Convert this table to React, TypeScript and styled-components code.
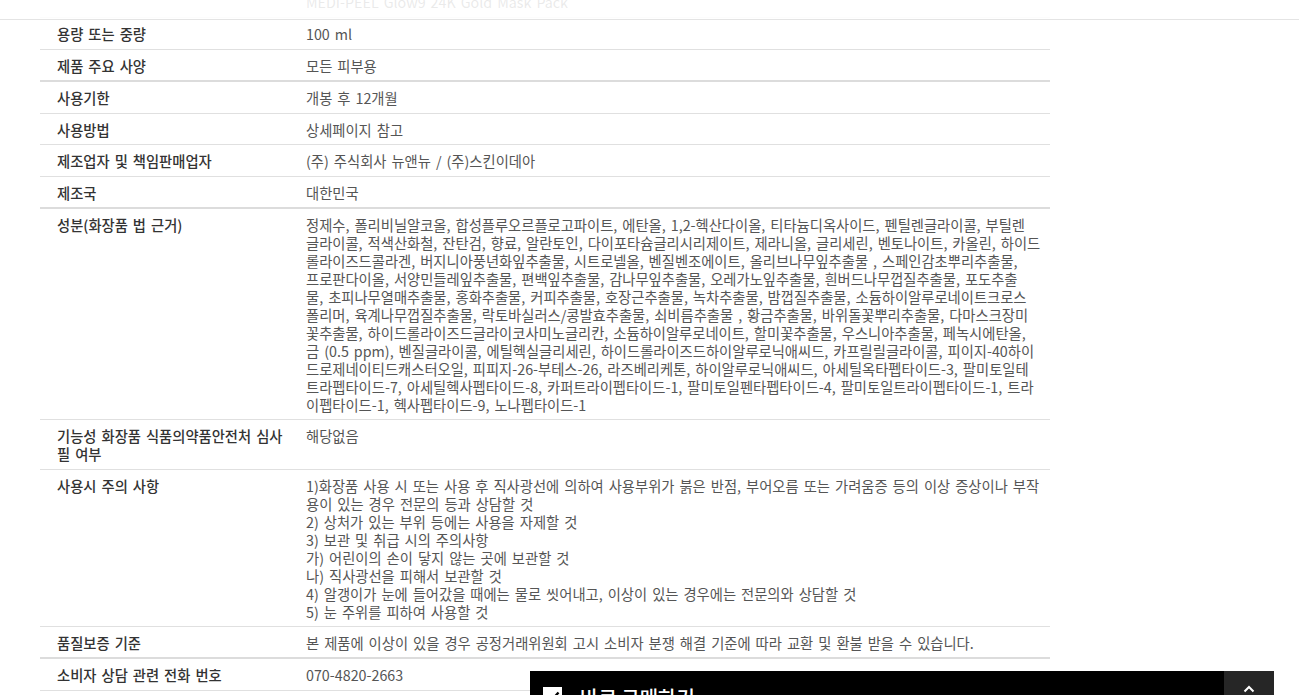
import React from "react";
import styled, { createGlobalStyle } from "styled-components";

const GlobalStyle = createGlobalStyle`
  html, body { margin: 0; padding: 0; background: #fff; }
  body {
    font-family: "Noto Sans CJK KR", "Noto Sans", sans-serif;
    font-size: 14.3px;
    word-spacing: 1.8px;
    color: #555;
  }
`;

const TopBar = styled.div`
  position: fixed;
  top: 0;
  left: 0;
  right: 0;
  height: 19px;
  background: rgba(255, 255, 255, 0.88);
  border-bottom: 1px solid #e4e4e4;
  z-index: 5;
`;

const Page = styled.main`
  padding-left: 40px;
  margin-top: -32px;
`;

const Table = styled.div`
  width: 1010px;
  display: flex;
  flex-direction: column;
`;

const Row = styled.div<{ $strong?: boolean; $tight?: boolean }>`
  display: grid;
  grid-template-columns: 266px 1fr;
  padding: 7px 0 ${(p) => (p.$strong || p.$tight ? "5px" : "6px")};
  border-bottom: ${(p) => (p.$strong ? "2px solid #dcdcdc" : "1px solid #e0e0e0")};
  line-height: 18px;
`;

const Label = styled.div`
  padding: 0 20px 0 17px;
  color: #333;
  font-weight: 500;
`;

const Value = styled.div`
  color: #555;
  white-space: pre;
`;

const BuyBar = styled.div`
  position: fixed;
  left: 530px;
  top: 671px;
  width: 744px;
  height: 54px;
  display: flex;
  background: #000;
  z-index: 6;
`;

const BuyLabel = styled.div`
  flex: 1;
  display: flex;
  align-items: flex-start;
  gap: 18px;
  padding: 15px 0 0 13px;
  color: #fff;
  font-size: 20px;
  font-weight: 500;
  line-height: 24px;
  word-spacing: 0;
`;

const CheckBox = styled.span`
  width: 19px;
  height: 19px;
  margin-top: 1px;
  background: #fff;
  display: flex;
  align-items: center;
  justify-content: center;
`;

const TopButton = styled.div`
  width: 50px;
  background: #262626;
  display: flex;
  justify-content: center;
  padding-top: 14px;
`;

type Item = { label: string; value: string; strong?: boolean; tight?: boolean };

const items: Item[] = [
  { label: "제품명", value: "메디필 글로우9 24K 골드 마스크팩\nMEDI-PEEL Glow9 24K Gold Mask Pack" },
  { label: "용량 또는 중량", value: "100 ml" },
  { label: "제품 주요 사양", value: "모든 피부용", strong: true },
  { label: "사용기한", value: "개봉 후 12개월" },
  { label: "사용방법", value: "상세페이지 참고", tight: true },
  { label: "제조업자 및 책임판매업자", value: "(주) 주식회사 뉴앤뉴 / (주)스킨이데아" },
  { label: "제조국", value: "대한민국", strong: true },
  {
    label: "성분(화장품 법 근거)",
    tight: true,
    value: [
      "정제수, 폴리비닐알코올, 합성플루오르플로고파이트, 에탄올, 1,2-헥산다이올, 티타늄디옥사이드, 펜틸렌글라이콜, 부틸렌",
      "글라이콜, 적색산화철, 잔탄검, 향료, 알란토인, 다이포타슘글리시리제이트, 제라니올, 글리세린, 벤토나이트, 카올린, 하이드",
      "롤라이즈드콜라겐, 버지니아풍년화잎추출물, 시트로넬올, 벤질벤조에이트, 올리브나무잎추출물 , 스페인감초뿌리추출물,",
      "프로판다이올, 서양민들레잎추출물, 편백잎추출물, 감나무잎추출물, 오레가노잎추출물, 흰버드나무껍질추출물, 포도추출",
      "물, 초피나무열매추출물, 홍화추출물, 커피추출물, 호장근추출물, 녹차추출물, 밤껍질추출물, 소듐하이알루로네이트크로스",
      "폴리머, 육계나무껍질추출물, 락토바실러스/콩발효추출물, 쇠비름추출물 , 황금추출물, 바위돌꽃뿌리추출물, 다마스크장미",
      "꽃추출물, 하이드롤라이즈드글라이코사미노글리칸, 소듐하이알루로네이트, 할미꽃추출물, 우스니아추출물, 페녹시에탄올,",
      "금 (0.5 ppm), 벤질글라이콜, 에틸헥실글리세린, 하이드롤라이즈드하이알루로닉애씨드, 카프릴릴글라이콜, 피이지-40하이",
      "드로제네이티드캐스터오일, 피피지-26-부테스-26, 라즈베리케톤, 하이알루로닉애씨드, 아세틸옥타펩타이드-3, 팔미토일테",
      "트라펩타이드-7, 아세틸헥사펩타이드-8, 카퍼트라이펩타이드-1, 팔미토일펜타펩타이드-4, 팔미토일트라이펩타이드-1, 트라",
      "이펩타이드-1, 헥사펩타이드-9, 노나펩타이드-1",
    ].join("\n"),
  },
  { label: "기능성 화장품 식품의약품안전처 심사필 여부", value: "해당없음" },
  {
    label: "사용시 주의 사항",
    tight: true,
    value: [
      "1)화장품 사용 시 또는 사용 후 직사광선에 의하여 사용부위가 붉은 반점, 부어오름 또는 가려움증 등의 이상 증상이나 부작",
      "용이 있는 경우 전문의 등과 상담할 것",
      "2) 상처가 있는 부위 등에는 사용을 자제할 것",
      "3) 보관 및 취급 시의 주의사항",
      "가) 어린이의 손이 닿지 않는 곳에 보관할 것",
      "나) 직사광선을 피해서 보관할 것",
      "4) 알갱이가 눈에 들어갔을 때에는 물로 씻어내고, 이상이 있는 경우에는 전문의와 상담할 것",
      "5) 눈 주위를 피하여 사용할 것",
    ].join("\n"),
  },
  {
    label: "품질보증 기준",
    value: "본 제품에 이상이 있을 경우 공정거래위원회 고시 소비자 분쟁 해결 기준에 따라 교환 및 환불 받을 수 있습니다.",
    strong: true,
  },
  { label: "소비자 상담 관련 전화 번호", value: "070-4820-2663" },
];

export default function App() {
  return (
    <>
      <GlobalStyle />
      <TopBar />
      <Page>
        <Table>
          {items.map((it) => (
            <Row key={it.label} $strong={it.strong} $tight={it.tight}>
              <Label>{it.label}</Label>
              <Value>{it.value}</Value>
            </Row>
          ))}
        </Table>
      </Page>
      <BuyBar>
        <BuyLabel>
          <CheckBox>
            <svg width="14" height="12" viewBox="0 0 14 12">
              <path d="M1.5 6.5 L5 10 L12.5 1.5" fill="none" stroke="#000" strokeWidth="2.4" />
            </svg>
          </CheckBox>
          바로 구매하기
        </BuyLabel>
        <TopButton>
          <svg width="12" height="8" viewBox="0 0 12 8">
            <path d="M1.5 6.5 L6 2 L10.5 6.5" fill="none" stroke="#fff" strokeWidth="2" />
          </svg>
        </TopButton>
      </BuyBar>
    </>
  );
}
